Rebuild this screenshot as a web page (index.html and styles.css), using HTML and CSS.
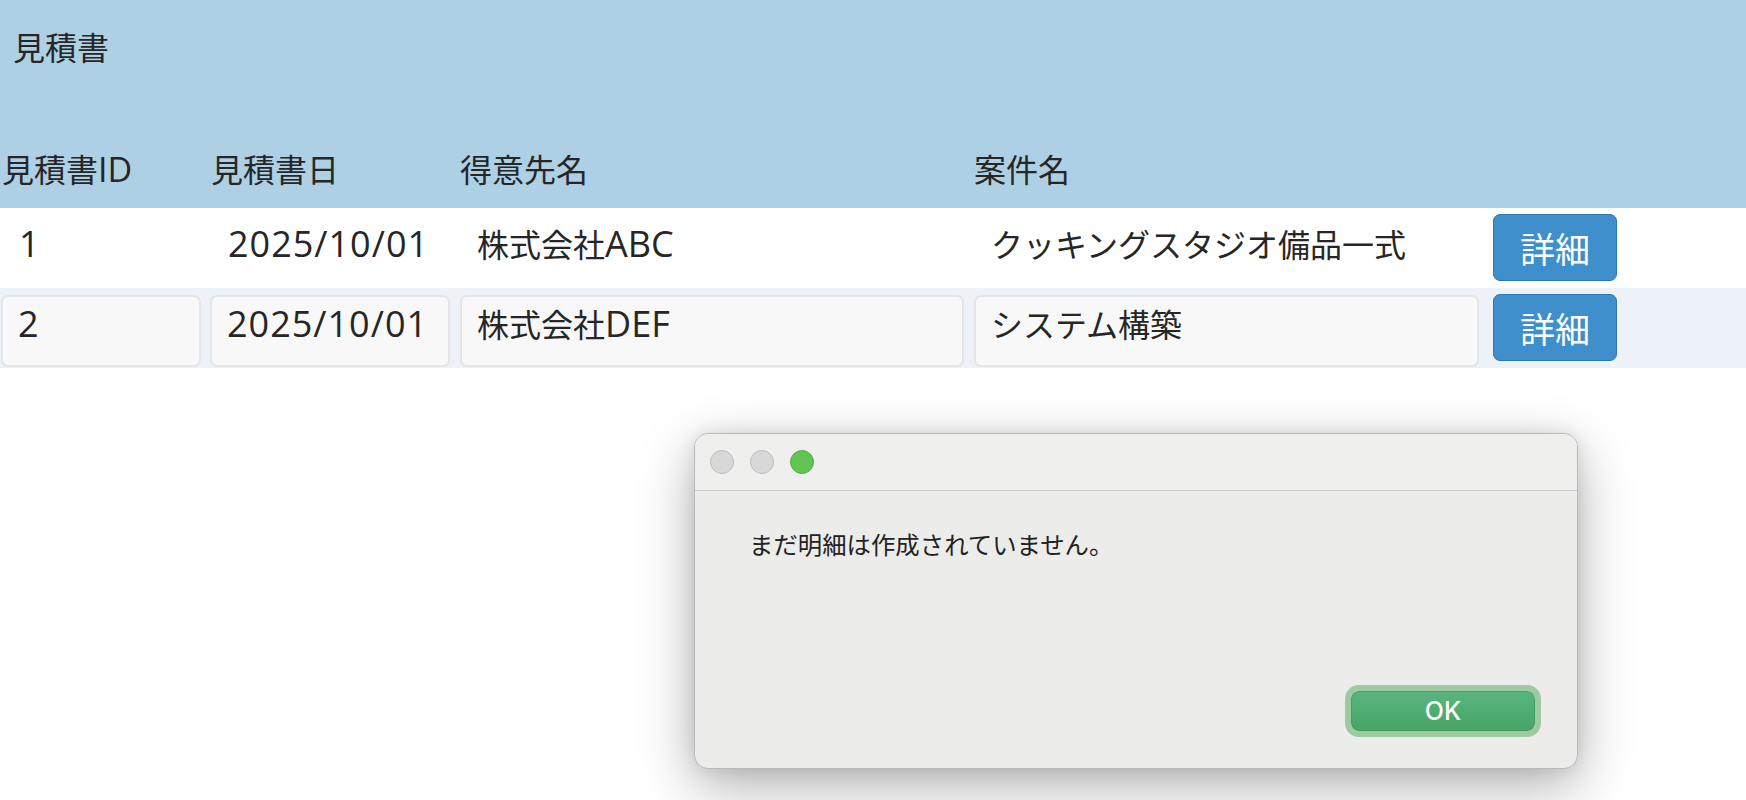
FILE: index.html
```html
<!DOCTYPE html>
<html lang="ja">
<head>
<meta charset="utf-8">
<title>見積書</title>
<link rel="stylesheet" href="styles.css">
</head>
<body>
<div class="page">
  <header class="header">
    <div class="title">見積書</div>
    <div class="grid labels">
      <div class="label">見積書<span class="lat">ID</span></div>
      <div class="label">見積書日</div>
      <div class="label">得意先名</div>
      <div class="label">案件名</div>
      <div></div>
    </div>
  </header>
  <div class="grid row row-plain">
    <div class="cell"><span class="lat">1</span></div>
    <div class="cell"><span class="lat num">2025/10/01</span></div>
    <div class="cell">株式会社<span class="lat">ABC</span></div>
    <div class="cell">クッキングスタジオ備品一式</div>
    <div class="btn-cell"><button class="btn">詳細</button></div>
  </div>
  <div class="grid row row-edit">
    <div class="cell box"><span class="lat">2</span></div>
    <div class="cell box"><span class="lat num">2025/10/01</span></div>
    <div class="cell box">株式会社<span class="lat">DEF</span></div>
    <div class="cell box">システム構築</div>
    <div class="btn-cell"><button class="btn">詳細</button></div>
  </div>

  <div class="dialog">
    <div class="titlebar">
      <span class="light gray"></span>
      <span class="light gray"></span>
      <span class="light green"></span>
    </div>
    <div class="dialog-body">
      <p class="message">まだ明細は作成されていません。</p>
      <div class="actions">
        <button class="ok">OK</button>
      </div>
    </div>
  </div>
</div>
</body>
</html>
```
FILE: styles.css
```css
* { box-sizing: border-box; }
html, body {
  margin: 0;
  padding: 0;
  background: #ffffff;
}
body {
  font-family: "Noto Sans CJK JP", "Noto Sans", sans-serif;
  color: #262626;
  width: 1746px;
  height: 800px;
  overflow: hidden;
}
.page {
  position: relative;
  width: 1746px;
  height: 800px;
}
.lat {
  font-family: "Open Sans", "Liberation Sans", sans-serif;
  font-size: 36px;
  line-height: 36px;
}
.num { letter-spacing: 1px; }
.header {
  background: #aed0e5;
  height: 208px;
}
.title {
  font-size: 32px;
  line-height: 36px;
  padding: 28px 0 0 13px;
}
.grid {
  display: grid;
  grid-template-columns: 200px 240px 505px 506px 129px;
  column-gap: 9px;
  padding-left: 1px;
}
.labels {
  margin-top: 86px;
  font-size: 32px;
  line-height: 36px;
}
.label { padding-left: 1px; }
.labels .lat { font-size: 34px; }
.row {
  height: 80px;
  font-size: 32px;
  line-height: 36px;
}
.row-plain { background: #ffffff; }
.row-plain .cell {
  padding: 17px 0 0 18px;
}
.row-edit { background: #edf2f9; }
.box {
  margin-top: 7px;
  height: 72px;
  background: #f8f8f8;
  border: 2px solid #e4e5e7;
  border-radius: 7px;
  padding: 8px 0 0 15px;
}
.row-edit .box:nth-child(3) { margin-left: 1px; }
.row-edit .box:nth-child(4) { margin-left: 1px; }
.btn-cell {
  display: flex;
  justify-content: flex-end;
  align-items: flex-start;
  padding-top: 6px;
}
.btn {
  width: 124px;
  height: 67px;
  background: #3e8fcb;
  border: 1px solid #2e78b1;
  border-radius: 7px;
  color: #ffffff;
  font-family: "Noto Sans CJK JP", sans-serif;
  font-size: 35px;
  line-height: 40px;
  padding: 0;
}

/* dialog */
.dialog {
  position: absolute;
  left: 694px;
  top: 433px;
  width: 884px;
  height: 336px;
  background: #ececea;
  border: 1px solid #b9b9b9;
  border-radius: 14px;
  box-shadow: 0 18px 55px rgba(0, 0, 0, 0.30), 0 0 18px rgba(0, 0, 0, 0.10);
  display: flex;
  flex-direction: column;
  overflow: hidden;
}
.titlebar {
  height: 57px;
  background: #efefee;
  border-bottom: 1px solid #c9c9c9;
  display: flex;
  align-items: center;
  gap: 16px;
  padding-left: 15px;
}
.light {
  width: 24px;
  height: 24px;
  border-radius: 50%;
}
.light.gray {
  background: #d8d8d8;
  border: 1px solid #bdbdbd;
}
.light.green {
  background: #61c454;
  border: 1px solid #53ad46;
}
.dialog-body {
  flex: 1;
  display: flex;
  flex-direction: column;
  padding: 0 36px 31px 54px;
}
.message {
  margin: 36px 0 0 0;
  font-size: 24.4px;
  line-height: 34px;
  color: #222222;
}
.actions {
  margin-top: auto;
  display: flex;
  justify-content: flex-end;
}
.ok {
  width: 196px;
  height: 52px;
  border-radius: 14px;
  border: 6px solid #9ec9a1;
  background: linear-gradient(#58b57e, #48a567);
  background-clip: padding-box;
  color: #ffffff;
  font-family: Inter, "Liberation Sans", sans-serif;
  font-weight: 500;
  font-size: 25px;
  line-height: 36px;
  padding: 0;
  box-shadow: inset 0 0 0 1px rgba(60, 140, 85, 0.5);
}
```
